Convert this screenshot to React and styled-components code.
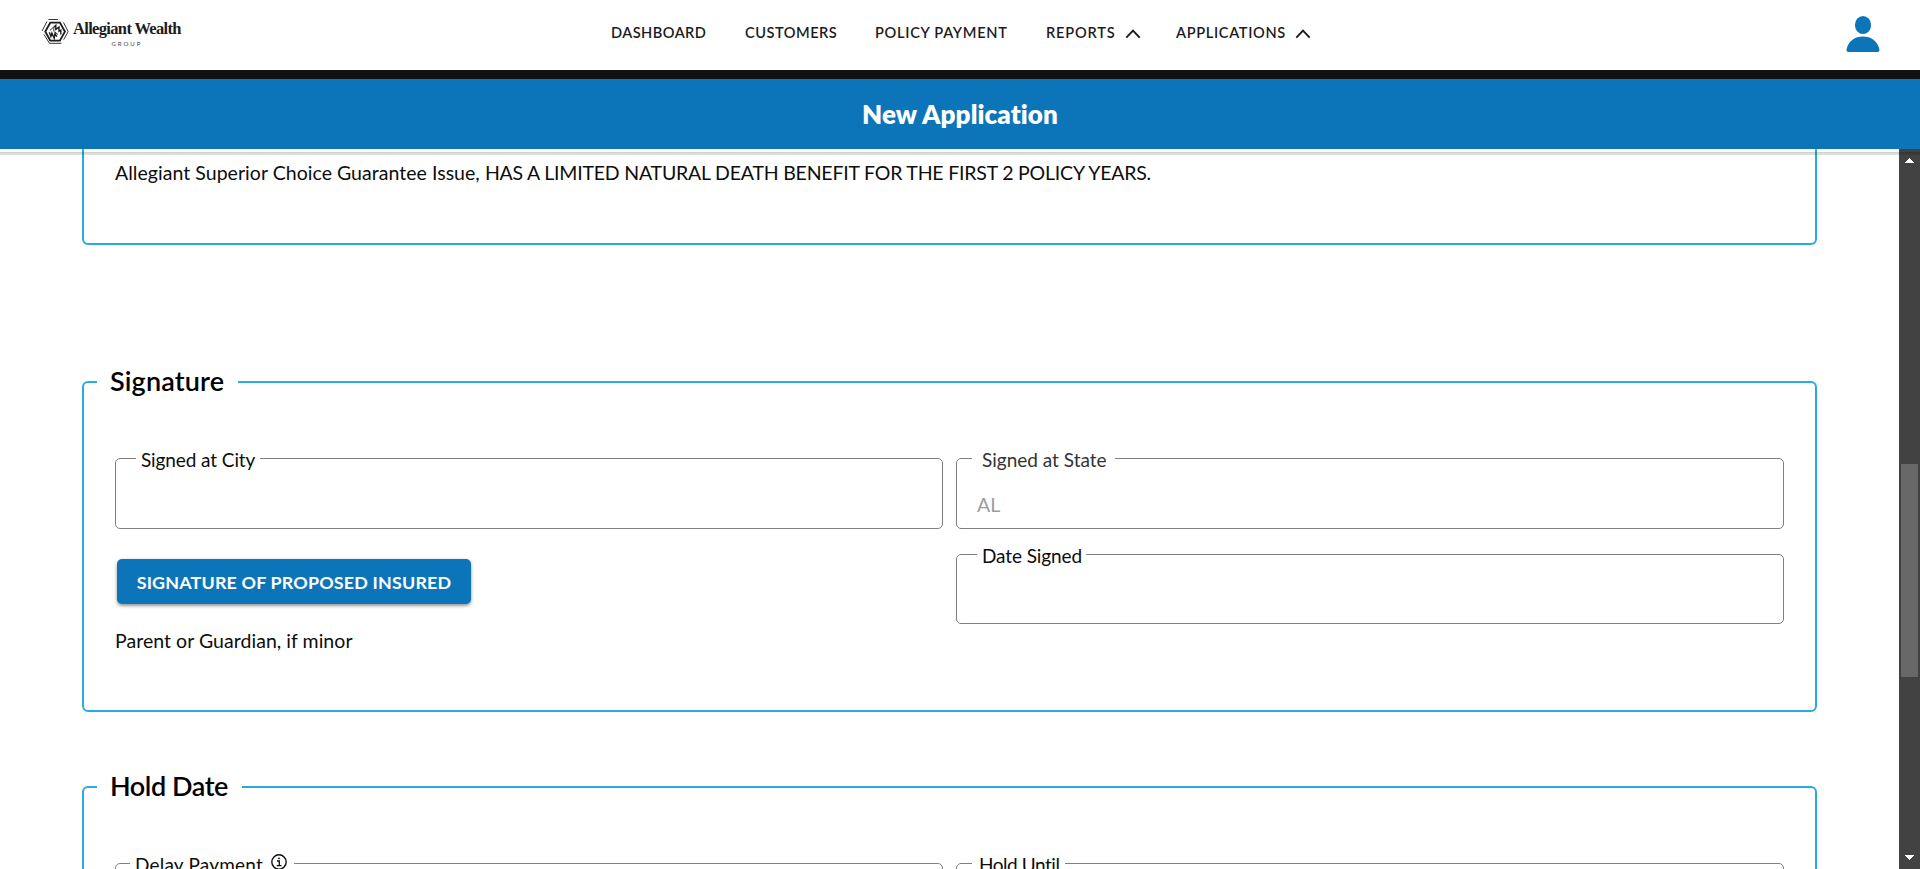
import React from 'react';
import styled, { createGlobalStyle } from 'styled-components';

const Global = createGlobalStyle`
  *, *::before, *::after { box-sizing: border-box; }
  html, body { margin: 0; height: 869px; overflow: hidden; background: #fff; }
  body { font-family: Lato, "Open Sans", sans-serif; color: #0d0d0d; }
`;

const Page = styled.div`
  display: flex;
  flex-direction: column;
  width: 1920px;
  height: 869px;
  overflow: hidden;
`;

const Header = styled.header`
  flex: none;
  display: grid;
  grid-template-columns: 611px 1fr 609px;
  height: 79px;
  border-bottom: 9px solid #111;
  background: #fff;
`;

const Brand = styled.a`
  display: flex;
  align-items: flex-start;
  padding: 18px 0 0 41px;
`;

const BrandText = styled.div`
  display: flex;
  flex-direction: column;
  align-items: center;
  margin-left: 4px;
  color: #1d1d1d;
`;

const BrandName = styled.span`
  font: 700 16.5px/22px "Liberation Serif", serif;
  letter-spacing: ${p => p.$track}px;
  white-space: nowrap;
`;

const BrandSub = styled.span`
  font: 400 6px/8px Lato, sans-serif;
  letter-spacing: 2px;
  color: #444;
`;

const Nav = styled.nav`
  display: flex;
  align-items: flex-start;
  padding-top: 23px;
`;

const NavItem = styled.a`
  display: flex;
  align-items: center;
  flex: none;
  width: ${p => p.$width}px;
  font-size: 14.6px;
  line-height: 19px;
  font-weight: 600;
  letter-spacing: ${p => p.$track}px;
  color: #1c1c1c;
  white-space: nowrap;

  svg { margin: 2px 0 0 9px; }
`;

const Account = styled.div`
  display: flex;
  justify-content: flex-end;
  padding: 16px 40px 0 0;
`;

const TitleBar = styled.div`
  position: relative;
  z-index: 1;
  flex: none;
  display: flex;
  justify-content: center;
  height: 70px;
  background: #0c75b9;
  color: #fff;

  &::after {
    content: "";
    position: absolute;
    top: 73px;
    left: 0;
    right: 0;
    height: 3px;
    background: linear-gradient(rgba(0, 0, 0, 0.19), rgba(0, 0, 0, 0.1));
  }
`;

const Title = styled.h1`
  margin: 0;
  font-size: 26px;
  font-weight: 800;
  line-height: 70px;
  letter-spacing: ${p => p.$track}px;
`;

const Body = styled.div`
  flex: 1;
  display: flex;
  min-height: 0;
`;

const Content = styled.main`
  flex: 1;
  display: flex;
  flex-direction: column;
  padding: 0 82px;
  overflow: hidden;
`;

const Section = styled.fieldset`
  flex: none;
  display: block;
  min-width: 0;
  margin: ${p => p.$gap}px 0 0;
  padding: 0 31px;
  height: ${p => p.$height}px;
  border: 2px solid #29abe2;
  border-radius: 6px;
`;

const Notice = styled(Section)`
  border-top: 0;
  border-radius: 0 0 6px 6px;
`;

const SectionTitle = styled.legend`
  display: block;
  width: ${p => p.$width}px;
  height: 34px;
  margin-left: -18px;
  padding: 0 0 0 13px;
  font-size: 27px;
  line-height: 32px;
  font-weight: 600;
  letter-spacing: ${p => p.$track}px;
  color: #000;
  white-space: nowrap;
`;

const Paragraph = styled.p`
  margin: ${p => p.$top || 0}px 0 0;
  font-size: 19.5px;
  line-height: 24px;
  letter-spacing: ${p => p.$track}px;
  white-space: nowrap;
`;

const Emphasis = styled.span`
  letter-spacing: -0.2px;
`;

const Columns = styled.div`
  display: grid;
  grid-template-columns: 828px 828px;
  column-gap: 13px;
  padding-top: 47px;
`;

const Column = styled.div`
  display: flex;
  flex-direction: column;
  align-items: flex-start;
`;

const Field = styled.fieldset`
  flex: none;
  width: 828px;
  height: ${p => p.$height}px;
  min-width: 0;
  margin: ${p => p.$gap || 0}px 0 0;
  padding: 0;
  border: 1px solid #808080;
  border-radius: 5px;
`;

const Label = styled.legend`
  display: flex;
  align-items: center;
  width: ${p => p.$width}px;
  height: 24px;
  margin-left: ${p => p.$left}px;
  padding: 0 0 0 ${p => p.$pad}px;
  font-size: 19px;
  line-height: 24px;
  letter-spacing: ${p => p.$track}px;
  color: ${p => p.$color || '#0d0d0d'};
  white-space: nowrap;

  span { position: relative; top: 2px; }
  svg { margin: -2px 0 0 8px; flex: none; }
`;

const Value = styled.div`
  padding: 23px 0 0 20px;
  font-size: 19.5px;
  line-height: 24px;
  color: #9c9c9c;
`;

const SignButton = styled.button`
  width: 354px;
  height: 45px;
  margin: 30px 0 0 2px;
  padding: 0;
  border: 0;
  border-radius: 5px;
  background: #0c75b9;
  box-shadow: 0 2px 3px rgba(0, 0, 0, 0.32), 0 1px 5px rgba(0, 0, 0, 0.14);
  color: #fff;
  font-family: inherit;
  font-size: 17.9px;
  font-weight: 700;
  letter-spacing: ${p => p.$track}px;
  white-space: nowrap;
`;

const Scrollbar = styled.div`
  flex: none;
  display: flex;
  flex-direction: column;
  align-items: center;
  width: 21px;
  padding: 9px 0;
  background: #424242;
`;

const Thumb = styled.div`
  width: 17px;
  height: 213px;
  margin: 301px 0 auto;
  background: #686868;
`;

const Emblem = () => (
  <svg width="28" height="28" viewBox="0 0 28 28" fill="none" stroke="#1d1d1d">
    <path d="M9.300 4.600h9.600l5 9-5 9H9.300l-5-9z" strokeWidth="1.9" />
    <path d="M7.500 1.500H17M6 3.500 1 13M22.500 4.500l4.700 9.100-4.500 8M20.500 25.300H8.500L3 16.500" strokeWidth="0.9" />
    <path d="m13 9 1.800-1.600v4L18 9.200v4l1.800-1v4.300M8.300 14.300l1.600 4.200 1-3.500 2.300 5.300.8-5 1.800 3.500" strokeWidth="1.4" />
    <path d="m8.800 12.400 4-3.400v4.500M14 14l3 2.500" strokeWidth="0.9" />
  </svg>
);

const Chevron = () => (
  <svg width="16" height="10" viewBox="0 0 16 10" fill="none" stroke="#1c1c1c" strokeWidth="1.9">
    <path d="m1.3 8.7 6.7-7 6.7 7" />
  </svg>
);

const Person = () => (
  <svg width="34" height="36" viewBox="0 0 34 36" fill="#0c75b9">
    <rect x="9" y="0" width="16" height="18" rx="8" ry="8.6" />
    <path d="M2.6 36h28.8c1.7 0 2.4-1.3 2-2.8C31.500 25 25 20.500 17 20.500S2.500 25 .6 33.200C.2 34.700.9 36 2.600 36z" />
  </svg>
);

const Info = () => (
  <svg width="16" height="16" viewBox="0 0 16 16" fill="none" stroke="#0d0d0d">
    <circle cx="8" cy="8" r="7.2" strokeWidth="1.4" />
    <path d="M6 7h2.300v4.600M5.700 11.600h4.800" strokeWidth="1.3" />
    <circle cx="8" cy="4.400" r="0.600" />
  </svg>
);

const Arrow = ({ down }) => (
  <svg width="9" height="5" viewBox="0 0 9 5" fill="#fff" shapeRendering="crispEdges">
    <path d={down ? 'M0 0h9L4.500 5z' : 'M0 5h9L4.500 0z'} />
  </svg>
);

export default function App() {
  return (
    <Page>
      <Global />
      <Header>
        <Brand>
          <Emblem />
          <BrandText>
            <BrandName $track={-0.66}>Allegiant Wealth</BrandName>
            <BrandSub>GROUP</BrandSub>
          </BrandText>
        </Brand>
        <Nav>
          <NavItem $width={134} $track={0.45}>DASHBOARD</NavItem>
          <NavItem $width={130} $track={0.5}>CUSTOMERS</NavItem>
          <NavItem $width={171} $track={0.7}>POLICY PAYMENT</NavItem>
          <NavItem $width={130} $track={0.8}>REPORTS <Chevron /></NavItem>
          <NavItem $width={135} $track={0.65}>APPLICATIONS <Chevron /></NavItem>
        </Nav>
        <Account><Person /></Account>
      </Header>
      <TitleBar><Title $track={0.1}>New Application</Title></TitleBar>
      <Body>
        <Content>
          <Notice as="section" $gap={0} $height={96}>
            <Paragraph $top={12} $track={0.04}>
              Allegiant Superior Choice Guarantee Issue,{' '}
              <Emphasis>HAS A LIMITED NATURAL DEATH BENEFIT FOR THE FIRST 2 POLICY YEARS.</Emphasis>
            </Paragraph>
          </Notice>
          <Section $gap={120} $height={347}>
            <SectionTitle $width={141} $track={0.15}>Signature</SectionTitle>
            <Columns>
              <Column>
                <Field $height={83}>
                  <Label $left={20} $width={124} $pad={5} $track={-0.1}><span>Signed at City</span></Label>
                </Field>
                <SignButton $track={0.17}>SIGNATURE OF PROPOSED INSURED</SignButton>
                <Paragraph $top={25} $track={0.04}>Parent or Guardian, if minor</Paragraph>
              </Column>
              <Column>
                <Field $height={83}>
                  <Label $left={15} $width={143} $pad={10} $track={0} $color="#333"><span>Signed at State</span></Label>
                  <Value>AL</Value>
                </Field>
                <Field $height={82} $gap={13}>
                  <Label $left={20} $width={109} $pad={5} $track={-0.1}><span>Date Signed</span></Label>
                </Field>
              </Column>
            </Columns>
          </Section>
          <Section $gap={58} $height={347}>
            <SectionTitle $width={145} $track={-0.45}>Hold Date</SectionTitle>
            <Columns>
              <Field $height={83}>
                <Label $left={14} $width={164} $pad={5} $track={0.2}><span>Delay Payment</span><Info /></Label>
              </Field>
              <Field $height={83}>
                <Label $left={15} $width={93} $pad={7} $track={-0.45}><span>Hold Until</span></Label>
              </Field>
            </Columns>
          </Section>
        </Content>
        <Scrollbar>
          <Arrow />
          <Thumb />
          <Arrow down />
        </Scrollbar>
      </Body>
    </Page>
  );
}
